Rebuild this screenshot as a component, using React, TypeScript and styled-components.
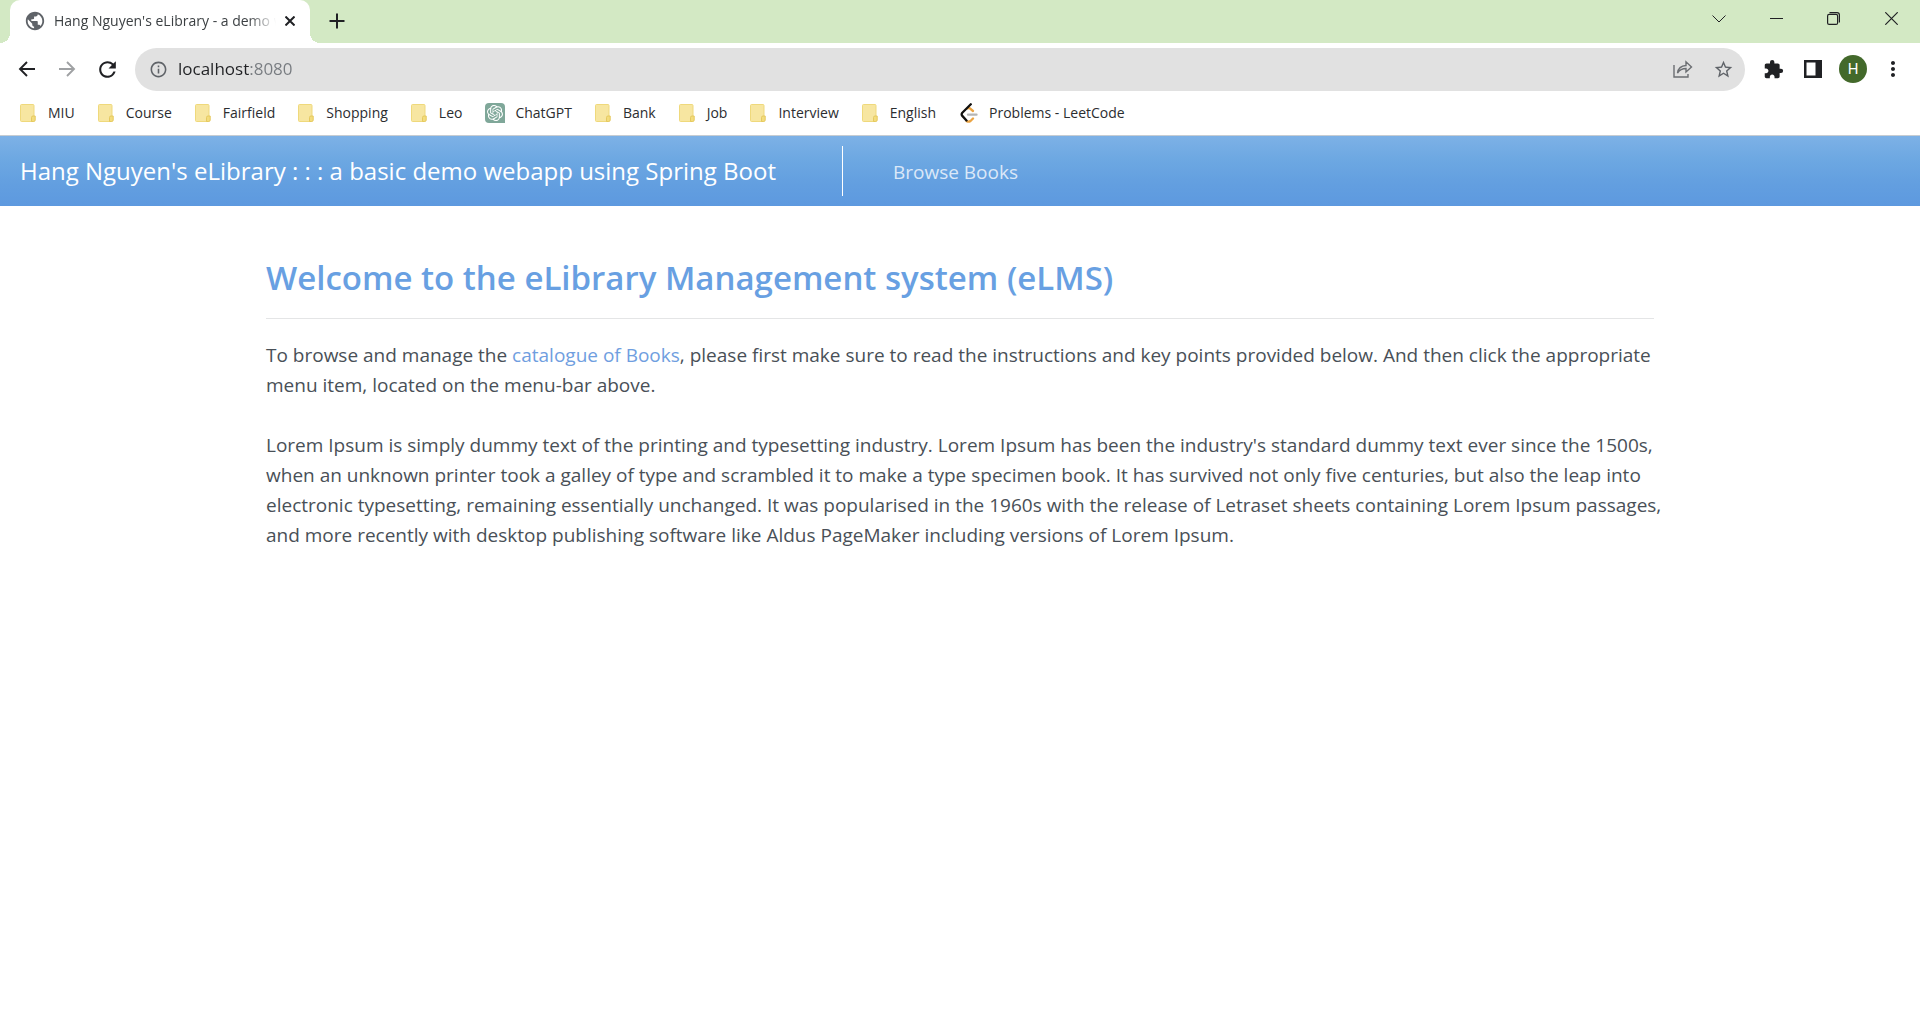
import React from "react";
import styled, { createGlobalStyle } from "styled-components";
import { MdPublic, MdExtension, MdInfoOutline, MdStarOutline, MdRefresh, MdMoreVert } from "react-icons/md";
import { SiOpenai } from "react-icons/si";

const GlobalStyle = createGlobalStyle`
  *, *::before, *::after { box-sizing: border-box; }
  body {
    margin: 0;
    background: #fff;
    color: #495057;
    font-family: "Open Sans", "Noto Sans", "Liberation Sans", sans-serif;
  }
  svg { display: block; flex: none; }
  a { text-decoration: none; }
`;

const TabStrip = styled.div`
  display: flex;
  align-items: flex-start;
  height: 43px;
  padding-left: 10px;
  background: #d3e9c4;
`;

const Tab = styled.div`
  position: relative;
  display: flex;
  align-items: center;
  width: 300px;
  height: 43px;
  padding: 0 10px 2px 14px;
  background: #fff;
  border-radius: 10px 10px 0 0;

  &::before, &::after {
    content: "";
    position: absolute;
    bottom: 0;
    width: 10px;
    height: 10px;
  }
  &::before {
    right: 100%;
    background: radial-gradient(circle at 0 0, #d3e9c4 10px, #fff 10px);
  }
  &::after {
    left: 100%;
    background: radial-gradient(circle at 100% 0, #d3e9c4 10px, #fff 10px);
  }
`;

const TabTitle = styled.span`
  flex: 1;
  min-width: 0;
  margin: 0 4px 0 8px;
  overflow: hidden;
  white-space: nowrap;
  font-size: 14px;
  line-height: 20px;
  color: #3c4043;
  mask-image: linear-gradient(to right, #000 calc(100% - 28px), transparent);
`;

const IconButton = styled.button<{ $w: number; $h?: number; $color?: string }>`
  display: flex;
  align-items: center;
  justify-content: center;
  flex: none;
  width: ${(p) => p.$w}px;
  height: ${(p) => p.$h ?? 40}px;
  padding: 0;
  border: 0;
  background: none;
  color: ${(p) => p.$color ?? "#202124"};
`;

const WindowControls = styled.div`
  display: flex;
  margin-left: auto;
`;

const Toolbar = styled.div`
  display: flex;
  align-items: center;
  height: 48px;
  padding: 4px 7px 0;
`;

const Omnibox = styled.form`
  display: flex;
  align-items: center;
  flex: 1;
  height: 43px;
  margin: 0 8px;
  padding: 0 2px 0 14px;
  border-radius: 22px;
  background: #e1e1e1;
  color: #5f6368;
`;

const Address = styled.input`
  flex: 1;
  min-width: 0;
  margin-left: 10px;
  padding: 0;
  border: 0;
  outline: 0;
  font: 17px/24px "Open Sans", "Noto Sans", sans-serif;
  color: transparent;
  background: linear-gradient(to right, #202124 72px, #777b80 72px);
  background-clip: text;
`;

const Avatar = styled.span`
  display: grid;
  place-items: center;
  width: 28px;
  height: 28px;
  border-radius: 50%;
  background: #43692b;
  color: #fff;
  font: 400 15px/28px Roboto, sans-serif;
`;

const BookmarkBar = styled.nav`
  display: flex;
  align-items: center;
  gap: 23px;
  height: 45px;
  padding: 0 20px;
  border-bottom: 1px solid #c6ccd2;
`;

const Bookmark = styled.a`
  display: flex;
  align-items: center;
  gap: 10px;
  font-size: 14px;
  line-height: 20px;
  color: #2b2d30;
  white-space: nowrap;
`;

const GptBadge = styled.span`
  display: grid;
  place-items: center;
  width: 20px;
  height: 20px;
  border-radius: 4px 4px 0 4px;
  background: #7fa799;
  color: #fff;
`;

const NavBar = styled.header`
  display: flex;
  align-items: center;
  height: 70px;
  padding: 10px 20px;
  background: linear-gradient(to bottom, #7db1e6, #6da8e2 33%, #639fe0 67%, #5d99df);
  white-space: nowrap;
`;

const Brand = styled.a`
  padding-right: 66px;
  font-size: 24px;
  line-height: 52px;
  color: #fff;
`;

const NavMenu = styled.nav`
  display: flex;
  height: 50px;
  padding-left: 50px;
  border-left: 1px solid #fff;
`;

const NavLink = styled.a`
  font-size: 19px;
  line-height: 52px;
  color: #dbe8f8;
`;

const Content = styled.main`
  max-width: 1388px;
  margin: 0 auto;
  padding-top: 48px;
`;

const Heading = styled.h1`
  margin: 0;
  padding-bottom: 16px;
  border-bottom: 1px solid #e4e5e6;
  font-size: 33px;
  line-height: 48px;
  font-weight: 600;
  color: #68a0e2;
`;

const Paragraph = styled.p`
  margin: 21px -12px 30px 0;
  font-size: 19px;
  line-height: 30px;

  & + & { margin-top: 0; }
`;

const TextLink = styled.a`
  color: #6f9ee0;
`;

const Arrow = ({ forward = false }: { forward?: boolean }) => (
  <svg width="18" height="18" viewBox="0 0 18 18" fill="none" stroke="currentColor" strokeWidth="1.900">
    {forward ? <path d="M1 9h15M9 2l7 7-7 7" /> : <path d="M17 9H2M9 2L2 9l7 7" />}
  </svg>
);

const FolderIcon = () => (
  <svg width="18" height="18" viewBox="0 0 18 18">
    <rect x=".5" y=".5" width="13.5" height="17" rx="1" fill="#f7e6a1" stroke="#efd97c" />
    <path d="M11.5 17.500V13.500q0-1.500 1.500-1.500h2.200v4q0 1.500-1.500 1.500z" fill="#f3dc7c" stroke="#e5c95f" />
  </svg>
);

const LeetCodeIcon = () => (
  <svg width="20" height="20" viewBox="0 0 20 20" fill="none" strokeWidth="2.300" strokeLinecap="round" strokeLinejoin="round">
    <path d="M8.500 5.500l1.800-.6L14 8" stroke="#eba443" />
    <path d="M14 15.500l-2.500 2.500q-2 1.300-4 0" stroke="#eba443" />
    <path d="M11.800 1.300L3.300 9.700q-1.300 1.600 0 3.200L7.500 17.500" stroke="#111" />
    <path d="M9 11.700h8.500" stroke="#b5b5b5" />
  </svg>
);

const GptIcon = () => (
  <GptBadge>
    <SiOpenai size={16} />
  </GptBadge>
);

const bookmarks = [
  { name: "MIU", Icon: FolderIcon },
  { name: "Course", Icon: FolderIcon },
  { name: "Fairfield", Icon: FolderIcon },
  { name: "Shopping", Icon: FolderIcon },
  { name: "Leo", Icon: FolderIcon },
  { name: "ChatGPT", Icon: GptIcon },
  { name: "Bank", Icon: FolderIcon },
  { name: "Job", Icon: FolderIcon },
  { name: "Interview", Icon: FolderIcon },
  { name: "English", Icon: FolderIcon },
  { name: "Problems - LeetCode", Icon: LeetCodeIcon },
];

export default function App() {
  return (
    <>
      <GlobalStyle />
      <TabStrip>
        <Tab>
          <MdPublic size={22} color="#5f6368" />
          <TabTitle>Hang Nguyen's eLibrary - a demo webapp</TabTitle>
          <IconButton $w={20} $h={20} aria-label="Close tab">
            <svg width="10" height="10" viewBox="0 0 10 10" stroke="currentColor" strokeWidth="2">
              <path d="M.5.5l9 9M9.500.5l-9 9" />
            </svg>
          </IconButton>
        </Tab>
        <IconButton $w={54} $h={42} aria-label="New tab">
          <svg width="16" height="16" viewBox="0 0 16 16" stroke="currentColor" strokeWidth="2">
            <path d="M8 .5v15M.5 8h15" />
          </svg>
        </IconButton>
        <WindowControls>
          <IconButton $w={58} $h={37} aria-label="Search tabs">
            <svg width="14" height="8" viewBox="0 0 14 8" fill="none" stroke="currentColor">
              <path d="M.5.5L7 7 13.500.5" />
            </svg>
          </IconButton>
          <IconButton $w={56} $h={37} aria-label="Minimize">
            <svg width="13" height="1" viewBox="0 0 13 1">
              <rect width="13" height="1" fill="currentColor" />
            </svg>
          </IconButton>
          <IconButton $w={58} $h={37} aria-label="Restore">
            <svg width="13" height="13" viewBox="0 0 13 13" fill="none" stroke="currentColor" strokeWidth="1.200">
              <rect x=".6" y="2.400" width="10" height="10" rx="1.500" />
              <path d="M2.500.6H10q2.400 0 2.400 2.400v7.500" />
            </svg>
          </IconButton>
          <IconButton $w={58} $h={37} aria-label="Close window">
            <svg width="13" height="13" viewBox="0 0 13 13" stroke="currentColor" strokeWidth="1.200">
              <path d="M.3.3l12.400 12.400M12.700.3L.3 12.700" />
            </svg>
          </IconButton>
        </WindowControls>
      </TabStrip>

      <Toolbar>
        <IconButton $w={40} aria-label="Back"><Arrow /></IconButton>
        <IconButton $w={40} $color="#9fa1a3" aria-label="Forward"><Arrow forward /></IconButton>
        <IconButton $w={40} aria-label="Reload"><MdRefresh size={25} /></IconButton>
        <Omnibox onSubmit={(e) => e.preventDefault()}>
          <MdInfoOutline size={19} />
          <Address aria-label="Address" defaultValue="localhost:8080" />
          <IconButton $w={40} $color="#6b6e72" type="button" aria-label="Share this page">
            <svg width="20" height="18" viewBox="0 0 20 18" fill="none" stroke="currentColor" strokeWidth="1.400">
              <path d="M1 5v12h14v-3" />
              <path d="M4.500 13q1-7 8.500-7.500V1.800L18.500 7 13 12V8.500q-5.500 0-8.500 4.500z" />
            </svg>
          </IconButton>
          <IconButton $w={40} $color="#5f6368" type="button" aria-label="Bookmark this page">
            <MdStarOutline size={21} />
          </IconButton>
        </Omnibox>
        <IconButton $w={40} aria-label="Extensions"><MdExtension size={21} /></IconButton>
        <IconButton $w={40} aria-label="Side panel">
          <svg width="18" height="18" viewBox="0 0 18 18">
            <path d="M0 0h18v18H0zM2.500 2.500v13H11.500v-13z" fill="currentColor" fillRule="evenodd" />
          </svg>
        </IconButton>
        <IconButton $w={40} aria-label="Profile"><Avatar>H</Avatar></IconButton>
        <IconButton $w={40} aria-label="Menu"><MdMoreVert size={24} /></IconButton>
      </Toolbar>

      <BookmarkBar aria-label="Bookmarks">
        {bookmarks.map(({ name, Icon }) => (
          <Bookmark key={name} href="#">
            <Icon />
            {name}
          </Bookmark>
        ))}
      </BookmarkBar>

      <NavBar>
        <Brand href="#">Hang Nguyen's eLibrary : : : a basic demo webapp using Spring Boot</Brand>
        <NavMenu>
          <NavLink href="#">Browse Books</NavLink>
        </NavMenu>
      </NavBar>

      <Content>
        <Heading>Welcome to the eLibrary Management system (eLMS)</Heading>
        <Paragraph>
          To browse and manage the <TextLink href="#">catalogue of Books</TextLink>, please first make sure to read
          the instructions and key points provided below. And then click the appropriate menu item, located on the
          menu-bar above.
        </Paragraph>
        <Paragraph>
          Lorem Ipsum is simply dummy text of the printing and typesetting industry. Lorem Ipsum has been the
          industry's standard dummy text ever since the 1500s, when an unknown printer took a galley of type and
          scrambled it to make a type specimen book. It has survived not only five centuries, but also the leap into
          electronic typesetting, remaining essentially unchanged. It was popularised in the 1960s with the release of
          Letraset sheets containing Lorem Ipsum passages, and more recently with desktop publishing software like
          Aldus PageMaker including versions of Lorem Ipsum.
        </Paragraph>
      </Content>
    </>
  );
}
